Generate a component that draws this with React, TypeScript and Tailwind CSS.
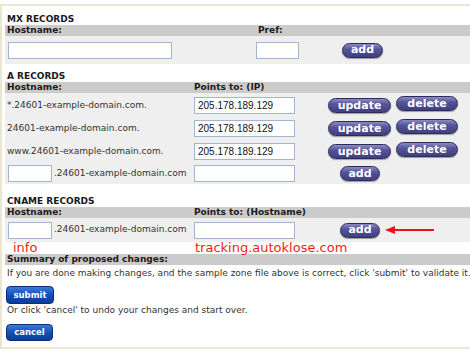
import React from "react";

const Btn = ({ label, w, extra = "" }: { label: string; w: string; extra?: string }) => (
  <div
    className={`${w} ${extra} h-[15px] rounded-full border border-[#2b2a58] bg-[linear-gradient(#8c8bc4,#55549a_40%,#403f80)] shadow-[0_1px_1px_rgba(0,0,0,0.35)] flex items-center justify-center text-white font-bold text-[11px] leading-none font-['DejaVu_Sans',sans-serif]`}
  >
    <span className="-mt-[1px]">{label}</span>
  </div>
);

const BlueBtn = ({ label, w, h }: { label: string; w: string; h: string }) => (
  <div
    className={`${w} ${h} rounded-[4px] border border-[#0b2f78] bg-[linear-gradient(#3d78dc,#1450b6_50%,#0a3d97)] flex items-center justify-center text-white font-bold text-[8.5px] leading-none`}
  >
    {label}
  </div>
);

const Input = ({ w, value = "" }: { w: string; value?: string }) => (
  <div
    className={`${w} h-[17px] bg-white border border-[#a2b6cf] flex items-center pl-[3px] text-[10px] text-[#111] font-['Liberation_Sans',Arial,sans-serif]`}
  >
    {value}
  </div>
);

const Heading = ({ children, mt }: { children: React.ReactNode; mt: string }) => (
  <div className={`${mt} h-[11px] leading-[11px] pl-[2px] font-bold text-[#1a1a1a]`}>{children}</div>
);

const Bar = ({ children }: { children: React.ReactNode }) => (
  <div className="h-[11px] leading-[11px] bg-[#cbcbcb] flex font-bold text-[#1e1a14]">{children}</div>
);

export default function App() {
  const aRows = [
    "*.24601-example-domain.com.",
    "24601-example-domain.com.",
    "www.24601-example-domain.com.",
  ];
  return (
    <div className="w-[470px] h-[352px] bg-white overflow-hidden font-['DejaVu_Sans',sans-serif] text-[9px] text-[#333]">
      <div className="mt-[4px] h-[345px] border-t-2 border-l-2 border-b-2 border-[#e9e7d2] pl-[3px]">
        {/* MX */}
        <Heading mt="mt-[8px]">MX RECORDS</Heading>
        <Bar>
          <div className="w-[251px] pl-[2px]">Hostname:</div>
          <div className="pl-[2px]">Pref:</div>
        </Bar>
        <div className="h-[28px] bg-[#efefef] flex items-center">
          <div className="w-[251px] pl-[3px]">
            <Input w="w-[164px]" />
          </div>
          <div className="w-[86px]">
            <Input w="w-[43px]" />
          </div>
          <Btn label="add" w="w-[41px]" />
        </div>

        {/* A */}
        <Heading mt="mt-[7px]">A RECORDS</Heading>
        <Bar>
          <div className="w-[189px] pl-[2px]">Hostname:</div>
          <div>Points to: (IP)</div>
        </Bar>
        <div className="bg-[#efefef] pt-[1px]">
          {aRows.map((r) => (
            <div key={r} className="h-[23px] flex items-center">
              <div className="w-[189px] pl-[2px]">{r}</div>
              <div className="w-[134px]">
                <Input w="w-[101px]" value="205.178.189.129" />
              </div>
              <Btn label="update" w="w-[63px]" />
              <Btn label="delete" w="w-[62px]" extra="ml-[5px] mb-[4px]" />
            </div>
          ))}
          <div className="h-[21px] flex items-center">
            <div className="w-[189px] pl-[3px] flex items-center">
              <Input w="w-[44px]" />
              <span className="ml-[2px]">.24601-example-domain.com</span>
            </div>
            <div className="w-[146px]">
              <Input w="w-[101px]" />
            </div>
            <Btn label="add" w="w-[40px]" />
          </div>
        </div>

        {/* CNAME */}
        <Heading mt="mt-[12px]">CNAME RECORDS</Heading>
        <Bar>
          <div className="w-[189px] pl-[2px]">Hostname:</div>
          <div>Points to: (Hostname)</div>
        </Bar>
        <div className="h-[24px] bg-[#efefef] flex items-center">
          <div className="w-[189px] pl-[3px] flex items-center">
            <Input w="w-[44px]" />
            <span className="ml-[2px]">.24601-example-domain.com</span>
          </div>
          <div className="w-[146px]">
            <Input w="w-[101px]" />
          </div>
          <Btn label="add" w="w-[40px]" />
          <svg width="50" height="10" viewBox="0 0 50 10" className="ml-[5px]">
            <line x1="8" y1="5" x2="49" y2="5" stroke="#e8141b" strokeWidth="2" />
            <polygon points="0,5 10,1 10,9" fill="#e8141b" />
          </svg>
        </div>
        <div className="h-[12px] flex text-[13px] leading-[12px] text-[#f21c1c] bg-white">
          <div className="w-[189px] pl-[8px]">info</div>
          <div className="pl-[1px]">tracking.autoklose.com</div>
        </div>

        {/* Summary */}
        <Bar>
          <div className="pl-[2px]">Summary of proposed changes:</div>
        </Bar>
        <div className="mt-[3px] h-[11px] leading-[11px] pl-[2px] whitespace-nowrap">
          If you are done making changes, and the sample zone file above is correct, click 'submit' to validate it.
        </div>
        <div className="mt-[7px] pl-[1px]">
          <BlueBtn label="submit" w="w-[48px]" h="h-[18px]" />
        </div>
        <div className="mt-[1px] h-[11px] leading-[11px] pl-[2px]">
          Or click 'cancel' to undo your changes and start over.
        </div>
        <div className="mt-[8px] pl-[1px]">
          <BlueBtn label="cancel" w="w-[47px]" h="h-[17px]" />
        </div>
      </div>
    </div>
  );
}
